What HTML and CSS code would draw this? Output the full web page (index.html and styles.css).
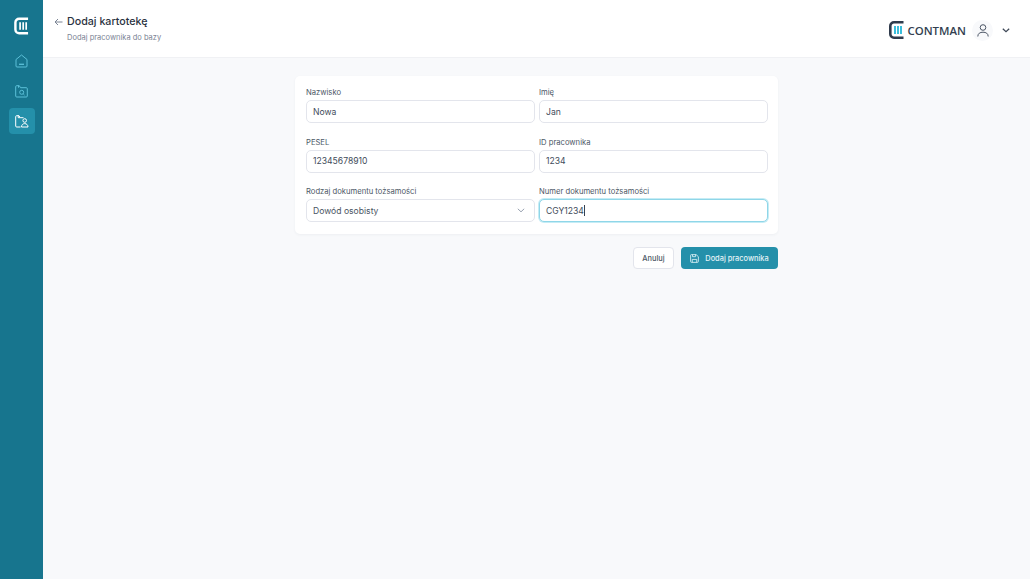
FILE: index.html
```html
<!DOCTYPE html>
<html lang="pl">
<head>
<meta charset="utf-8">
<title>Dodaj kartotekę</title>
<link rel="stylesheet" href="styles.css">
</head>
<body>
<div class="app">
  <aside class="sidebar">
    <svg class="logo" width="15" height="18" viewBox="0 0 16 18"><path d="M15 1.300H5.500A4 4 0 0 0 1.500 5.300v7.400a4 4 0 0 0 4 4H15" fill="none" stroke="#fff" stroke-width="2.600"/><path d="M6.500 5v8M9.800 5v8M13 5v8" fill="none" stroke="#fff" stroke-width="1.800"/></svg>
    <nav class="nav">
      <a class="nav-item"><svg width="13" height="14" viewBox="0 0 13 14" fill="none" stroke="#5cc0d8" stroke-width="1"><path d="M1 5.500 6.500 1 12 5.500V12a1 1 0 0 1-1 1H2a1 1 0 0 1-1-1z"/><path d="M4 10.300h5" stroke-width="1.300"/></svg></a>
      <a class="nav-item"><svg width="13" height="13" viewBox="0 0 13 13" fill="none" stroke="#5cc0d8" stroke-width="1"><path d="M.7 11V1.700a1 1 0 0 1 1-1h2.600l1.200 2h5.800a1 1 0 0 1 1 1V11a1 1 0 0 1-1 1H1.700a1 1 0 0 1-1-1z"/><path d="M3.500.7v2"/><circle cx="6.700" cy="7.300" r="2"/><path d="m8.200 8.800 1.300 1.300"/></svg></a>
      <a class="nav-item active"><svg width="14" height="13" viewBox="0 0 14 13" fill="none" stroke="#fff" stroke-width="1"><path d="M5.500 12H1.700a1 1 0 0 1-1-1V1.700a1 1 0 0 1 1-1h2.300l1.300 2h3.200"/><path d="M3.200.7v2h2"/><circle cx="9.700" cy="5.500" r="1.800"/><path d="M6.500 12c0-2 1.300-3.400 3.200-3.400s3.300 1.400 3.300 3.400z"/></svg></a>
    </nav>
  </aside>
  <div class="main">
    <header class="topbar">
      <div class="title-block">
        <div class="title-row">
          <svg width="9" height="8" viewBox="0 0 9 8" fill="none" stroke="#7b8494" stroke-width="1"><path d="M8.500 4H1M4 1 1 4l3 3"/></svg>
          <h1 class="title">Dodaj kartotekę</h1>
        </div>
        <p class="subtitle">Dodaj pracownika do bazy</p>
      </div>
      <div class="top-right">
        <div class="brand">
          <svg width="15" height="18" viewBox="0 0 15 18"><path d="M14.500 1.300H5A3.700 3.700 0 0 0 1.300 5v8A3.700 3.700 0 0 0 5 16.700h9.500" fill="none" stroke="#2f3b4c" stroke-width="2.600"/><path d="M6 5v8M9 5v8M12 5v8" fill="none" stroke="#19b3d6" stroke-width="1.700"/></svg>
          <span class="brand-name">CONTMAN</span>
        </div>
        <div class="avatar"><svg width="12" height="13" viewBox="0 0 12 13" fill="none" stroke="#4a5464" stroke-width="1"><circle cx="6" cy="3.500" r="2.800"/><path d="M.8 12.500c0-3 2.200-4.300 5.200-4.300s5.200 1.300 5.200 4.300"/></svg></div>
        <svg class="caret" width="8" height="5" viewBox="0 0 8 5" fill="none" stroke="#3d4756" stroke-width="1.200"><path d="m.8.8 3.200 3 3.200-3"/></svg>
      </div>
    </header>
    <main class="content">
      <div class="column">
        <form class="card">
          <div class="field"><label class="label">Nazwisko</label><div class="input">Nowa</div></div>
          <div class="field"><label class="label">Imię</label><div class="input">Jan</div></div>
          <div class="field"><label class="label">PESEL</label><div class="input">12345678910</div></div>
          <div class="field"><label class="label">ID pracownika</label><div class="input">1234</div></div>
          <div class="field"><label class="label">Rodzaj dokumentu tożsamości</label><div class="input select">Dowód osobisty<svg width="8" height="5" viewBox="0 0 8 5" fill="none" stroke="#98a1b0" stroke-width="1"><path d="m.8.8 3.200 3 3.200-3"/></svg></div></div>
          <div class="field"><label class="label">Numer dokumentu tożsamości</label><div class="input focused">CGY1234<span class="cursor"></span></div></div>
        </form>
        <div class="actions">
          <button type="button" class="btn btn-ghost">Anuluj</button>
          <button type="button" class="btn btn-primary"><svg width="9" height="9" viewBox="0 0 10 10" fill="none" stroke="#d5edf3" stroke-width="1"><path d="M1.500.7h5.300L9.300 3v5.300a1 1 0 0 1-1 1H1.700a1 1 0 0 1-1-1V1.500a.8.8 0 0 1 .8-.8z"/><path d="M2.800.7v2.300h3.400V.7M2.500 9.300V6h5v3.300"/></svg>Dodaj pracownika</button>
        </div>
      </div>
    </main>
  </div>
</div>
</body>
</html>
```

FILE: styles.css
```css
* { box-sizing: border-box; }
html, body { margin: 0; height: 100%; }
body { font-family: Inter, "Liberation Sans", sans-serif; color: #2f3b4c; background: #f8f9fb; overflow: hidden; }
.app { display: flex; height: 579px; }
.sidebar { width: 43px; flex: none; background: #17758e; display: flex; flex-direction: column; align-items: center; padding-top: 17px; }
.logo { display: block; }
.nav { display: flex; flex-direction: column; align-items: center; gap: 4px; margin-top: 13px; }
.nav-item { width: 26px; height: 26px; border-radius: 4px; display: flex; align-items: center; justify-content: center; }
.nav-item.active { background: #2490aa; }
.main { flex: 1; display: flex; flex-direction: column; min-width: 0; }
.topbar { height: 58px; flex: none; background: #fff; border-bottom: 1px solid #f0f1f4; display: flex; justify-content: space-between; padding: 14px 20px 0 11px; }
.title-row { display: flex; align-items: center; gap: 4px; height: 16px; }
.title { margin: 0; font-size: 10.700px; line-height: 16px; font-weight: 500; color: #2a3341; }
.subtitle { margin: 3px 0 0 13px; font-size: 7.500px; line-height: 10px; color: #7b8494; }
.top-right { display: flex; align-items: center; height: 32px; }
.brand { display: flex; align-items: center; gap: 4px; }
.brand-name { font-family: "Open Sans", "Liberation Sans", sans-serif; font-size: 11.400px; font-weight: 600; color: #333f50; }
.avatar { width: 21px; height: 21px; border-radius: 50%; background: #f8f9fb; display: flex; align-items: center; justify-content: center; margin-left: 6px; }
.caret { margin-left: 9px; }
.content { flex: 1; display: flex; justify-content: center; padding-top: 18px; }
.column { width: 483px; }
.card { background: #fff; border-radius: 5px; box-shadow: 0 1px 3px rgba(40, 50, 70, .05); padding: 12px 11px 12px; display: grid; grid-template-columns: 229px 229px; column-gap: 4px; row-gap: 14.500px; }
.field { display: flex; flex-direction: column; gap: 2px; }
.label { font-size: 7.650px; line-height: 10px; color: #4d5766; height: 10px; }
.input { height: 23px; border: 1px solid #e3e5ec; border-radius: 5px; background: #fff; padding: 0 6px; font-size: 8.600px; color: #414b5a; display: flex; align-items: center; }
.select { justify-content: space-between; padding-right: 9px; color: #4b5563; }
.focused { border-color: #8fd6e8; box-shadow: 0 0 0 1px #c5ecf5; }
.cursor { width: 1px; height: 11px; background: #374151; }
.actions { display: flex; justify-content: flex-end; gap: 7px; margin-top: 13px; }
.btn { height: 22px; border-radius: 4px; font-family: inherit; font-size: 7.400px; font-weight: 500; display: flex; align-items: center; justify-content: center; padding: 0; }
.btn-ghost { width: 41px; background: #fff; border: 1px solid #e3e5ec; color: #4d5766; }
.btn-primary { width: 97px; background: #2490aa; border: 0; color: #e4f3f7; gap: 6px; }
```
